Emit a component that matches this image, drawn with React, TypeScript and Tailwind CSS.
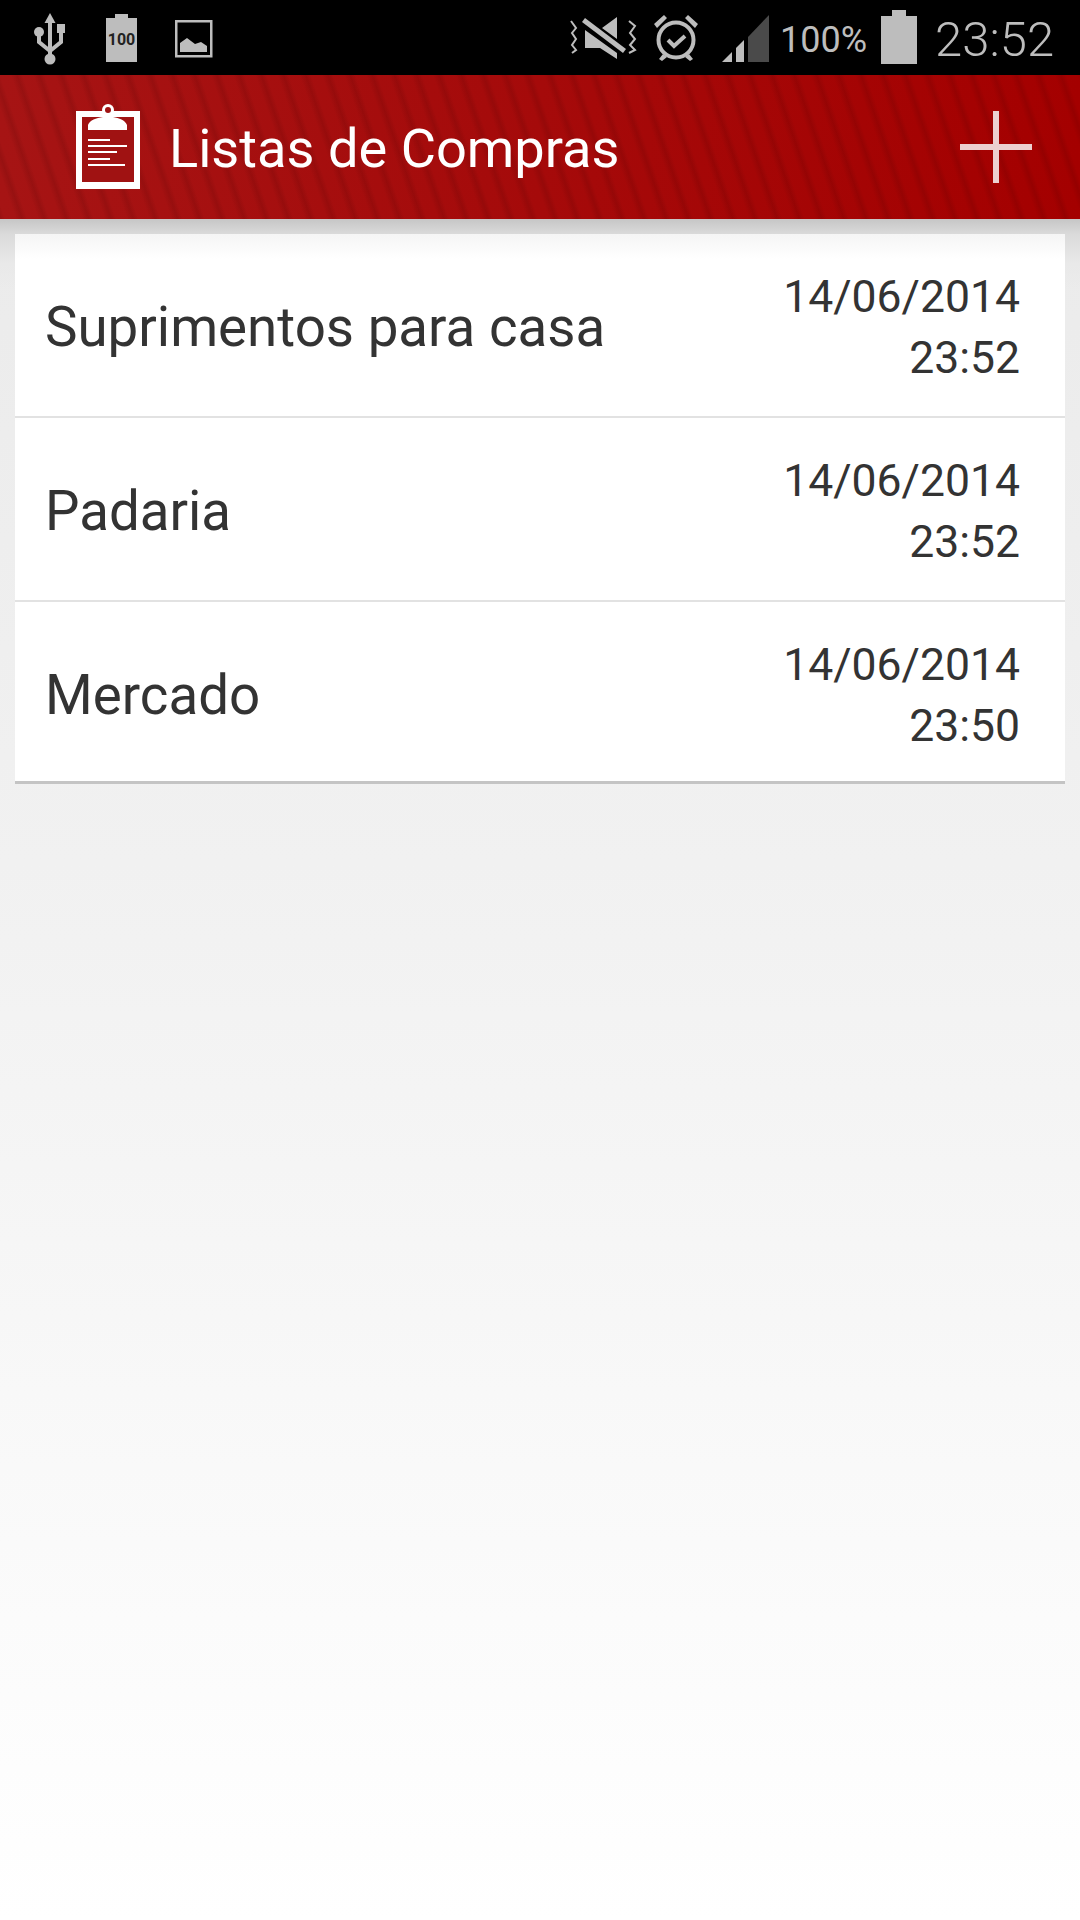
import React from "react";

const rows = [
  { name: "Suprimentos para casa", date: "14/06/2014", time: "23:52" },
  { name: "Padaria", date: "14/06/2014", time: "23:52" },
  { name: "Mercado", date: "14/06/2014", time: "23:50" },
];

const UsbIcon = () => (
  <svg width="34" height="54" viewBox="0 0 34 54" fill="#bdbdbd" className="ml-[34px] mt-[13px] shrink-0">
    <path d="M16 0l5.500 10h-11z" />
    <path d="M16 8v38M5 22v7l11 9M27 18v11l-11 9" fill="none" stroke="#bdbdbd" strokeWidth="4" />
    <circle cx="5" cy="19" r="5" />
    <rect x="23" y="11" width="8" height="9" />
    <circle cx="16" cy="46" r="5.500" />
  </svg>
);

const BatteryIcon = () => (
  <div className="ml-[38px] mt-[14px] flex w-[31px] shrink-0 flex-col items-center">
    <div className="h-[4px] w-[13px] bg-[#bdbdbd]" />
    <div className="flex h-[44px] w-[31px] items-center justify-center bg-[#bdbdbd] font-['Roboto',sans-serif] text-[16px] font-bold leading-none text-[#222]">
      100
    </div>
  </div>
);

const PictureIcon = () => (
  <svg width="38" height="38" viewBox="0 0 38 38" className="ml-[38px] mt-[20px] shrink-0">
    <rect x="1.250" y="1.250" width="35" height="35" fill="none" stroke="#bdbdbd" strokeWidth="2.500" />
    <path d="M5 23l7-5 8 6 6-2 6 4v6H5z" fill="#bdbdbd" />
  </svg>
);

const MuteIcon = () => (
  <svg width="68" height="46" viewBox="0 0 68 46" fill="none" className="ml-[357px] mt-[15px] shrink-0">
    <path d="M1 6l5 7-4 5 4 6-4 6 4 5-4 3" stroke="#bdbdbd" strokeWidth="2" />
    <path d="M59 6l6 5-5 7 5 6-5 6 5 5-6 3" stroke="#bdbdbd" strokeWidth="2" />
    <path d="M15 3l41 31-3 4L12 7z" fill="#bdbdbd" />
    <path d="M47 2v22L32 13zM15 15l32 23v6L30 33H15z" fill="#bdbdbd" />
  </svg>
);

const AlarmIcon = () => (
  <svg width="48" height="50" viewBox="0 0 48 50" fill="none" className="ml-[14px] mt-[13px] shrink-0">
    <circle cx="24" cy="27" r="17.500" stroke="#bdbdbd" strokeWidth="4" />
    <path d="M16 27l6 6 11-10" stroke="#bdbdbd" strokeWidth="4" />
    <path d="M2 11L12 2l3 3L5 15zM46 11L36 2l-3 3 10 10z" fill="#bdbdbd" />
    <path d="M11 41l-4 5 3 2 5-4zM37 41l4 5-3 2-5-4z" fill="#bdbdbd" />
  </svg>
);

const SignalIcon = () => (
  <svg width="48" height="50" viewBox="0 0 48 50" className="ml-[22px] mt-[13px] shrink-0">
    <path d="M0 49l10-10v10z" fill="#bdbdbd" />
    <path d="M14 35l8-8v22h-8z" fill="#bdbdbd" />
    <path d="M26 24L47 2v47H26z" fill="#4a4a4a" />
  </svg>
);

const ClipboardIcon = () => (
  <svg width="66" height="86" viewBox="0 0 66 86" className="shrink-0">
    <path d="M1 7h64v78H1z" fill="#fff" />
    <path d="M7 13h52v65H7z" fill="#a01212" />
    <circle cx="33" cy="6" r="6" fill="#fff" />
    <circle cx="33" cy="6" r="3" fill="#a01212" />
    <path d="M28 10h10v3c6 1 12 3 14 8v5H13v-5c2-5 8-7 15-8z" fill="#fff" />
    <path d="M13 35h22v2H13zM13 41h39v2H13zM13 47h29v2H13zM13 54h22v2H13zM13 60h37v2H13z" fill="#fff" />
  </svg>
);

const App: React.FC = () => {
  return (
    <div className="flex h-[1920px] w-[1080px] flex-col bg-[linear-gradient(to_bottom,#e9e9e9_0%,#f1f1f1_45%,#ffffff_100%)] font-['Roboto',sans-serif]">
      {/* status bar */}
      <div className="flex h-[75px] shrink-0 items-start bg-black">
        <UsbIcon />
        <BatteryIcon />
        <PictureIcon />
        <MuteIcon />
        <AlarmIcon />
        <SignalIcon />
        <span className="ml-[10px] mt-[21px] shrink-0 text-[36px] leading-[38px] text-[#bdbdbd]">100%</span>
        <div className="ml-[14px] mt-[10px] flex w-[36px] shrink-0 flex-col items-center">
          <div className="h-[6px] w-[14px] bg-[#bdbdbd]" />
          <div className="h-[48px] w-[36px] bg-[#bdbdbd]" />
        </div>
        <span className="ml-[18px] mt-[15px] shrink-0 text-[49px] font-light leading-[50px] text-[#bdbdbd]">23:52</span>
      </div>

      {/* action bar */}
      <div className="flex h-[144px] shrink-0 items-center bg-[repeating-linear-gradient(71deg,rgba(60,0,0,0.14)_0px,rgba(60,0,0,0)_5px,rgba(60,0,0,0)_15px,rgba(60,0,0,0.14)_21px),linear-gradient(to_right,#a61414,#a40000)] pl-[75px] pr-[48px]">
        <ClipboardIcon />
        <span className="ml-[28px] mt-[5px] flex-1 text-[54.200px] leading-none text-white">Listas de Compras</span>
        <div className="relative h-[72px] w-[72px]">
          <div className="absolute left-[33px] top-0 h-[72px] w-[6px] bg-[#ecd0d0]" />
          <div className="absolute left-0 top-[33px] h-[6px] w-[72px] bg-[#ecd0d0]" />
        </div>
      </div>

      {/* list, with the bar's shadow falling behind it */}
      <div className="bg-[linear-gradient(to_bottom,#c6c6c6_0px,#dadada_15px,#e9e9e9_45px,rgba(233,233,233,0)_70px)] px-[15px] pt-[15px]">
        <div className="flex flex-col border-b-[3px] border-[#c4c4c4] bg-[linear-gradient(to_bottom,#f5f5f5_0px,#ffffff_25px)]">
          {rows.map((row, i) => (
            <div
              key={row.name}
              className={`flex items-center justify-between pl-[30px] pr-[45px] text-[#333333] ${
                i < rows.length - 1 ? "h-[184px] border-b-[2px] border-[#e2e2e2] pt-[4px]" : "h-[179px] pt-[8px]"
              }`}
            >
              <span className="text-[54.700px] leading-none">{row.name}</span>
              <div className={`flex flex-col items-end text-[44.500px] leading-[61px] ${i < rows.length - 1 ? "mt-[2px]" : "mt-0"}`}>
                <span>{row.date}</span>
                <span>{row.time}</span>
              </div>
            </div>
          ))}
        </div>
      </div>
    </div>
  );
};

export default App;
